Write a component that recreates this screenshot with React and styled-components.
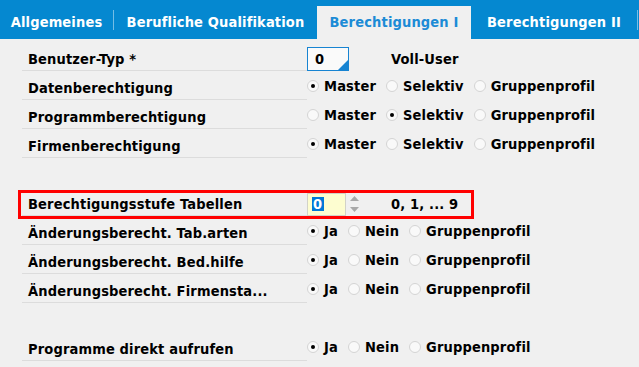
import React from 'react';
import styled, { createGlobalStyle, css } from 'styled-components';

const GlobalStyle = createGlobalStyle`
  html, body { margin: 0; padding: 0; background: #f0f0f0; }
  body {
    font-family: "DejaVu Sans Condensed", "DejaVu Sans", sans-serif;
    font-weight: bold;
    font-size: 14.5px;
    letter-spacing: 0.15px;
    color: #000;
  }
`;

const Page = styled.div`
  width: 639px;
  height: 367px;
  overflow: hidden;
  background: #f0f0f0;
`;

const TabBar = styled.div`
  display: flex;
  align-items: flex-end;
  height: 39px;
  background: #0588d0;
`;

const Tab = styled.div`
  flex: none;
  width: ${p => p.$w}px;
  height: 33px;
  line-height: 33px;
  text-align: center;
  white-space: nowrap;
  color: #fff;
  ${p => p.$active && css`
    background: #f0f0f0;
    color: #1c8bd6;
  `}
`;

const TabSep = styled.div`
  flex: none;
  align-self: center;
  width: 1px;
  height: 20px;
  background: rgba(255, 255, 255, 0.45);
`;

const Form = styled.div`
  padding: 4px 0 0 22px;
`;

const Row = styled.div`
  position: relative;
  display: grid;
  grid-template-columns: 285px 1fr;
  height: 29px;
  ${p => p.$highlight && css`
    &::after {
      content: '';
      position: absolute;
      top: 2px;
      left: -4px;
      width: 456px;
      height: 29px;
      box-sizing: border-box;
      border: 3px solid #ff0000;
      pointer-events: none;
    }
  `}
`;

const Spacer = styled.div`
  height: 29px;
`;

const Label = styled.div`
  height: 28px;
  box-sizing: border-box;
  padding: 5px 0 0 6px;
  line-height: 23px;
  border-bottom: 1px solid #dcdcdc;
  white-space: nowrap;
  overflow: hidden;
`;

const Controls = styled.div`
  display: flex;
  align-items: center;
  height: 28px;
`;

const StaticText = styled.div`
  align-self: flex-start;
  margin-left: ${p => p.$ml}px;
  padding-top: 5px;
  line-height: 23px;
  white-space: nowrap;
`;

const CodeInput = styled.div`
  position: relative;
  align-self: flex-start;
  margin-top: 4px;
  width: 42px;
  height: 24px;
  box-sizing: border-box;
  border: 1px solid #1784d2;
  background: #fafafa;
  padding-left: 7px;
  line-height: 22px;
  overflow: hidden;
`;

const Corner = styled.svg`
  position: absolute;
  right: 0;
  bottom: 0;
`;

const SpinInput = styled.div`
  align-self: flex-start;
  margin-top: 5px;
  width: 39px;
  height: 23px;
  box-sizing: border-box;
  border: 1px solid #d2d2c8;
  background: #fdfdd0;
  padding: 2px 0 0 4px;
`;

const Selected = styled.span`
  display: inline-block;
  height: 14px;
  line-height: 14px;
  padding: 0 2px 0 1px;
  background: #0078d7;
  color: #fff;
`;

const SpinArrows = styled.svg`
  align-self: flex-start;
  margin: 8px 0 0 4px;
  flex: none;
`;

const RadioGroup = styled.div`
  display: flex;
  align-items: center;
  gap: 10px;
  height: 28px;
`;

const Option = styled.label`
  display: flex;
  align-items: center;
  gap: 5px;
  line-height: 28px;
  white-space: nowrap;
`;

const Circle = styled.span`
  position: relative;
  flex: none;
  width: 12px;
  height: 12px;
  box-sizing: border-box;
  border-radius: 50%;
  border: 1px solid #d4d4d4;
  background: #f9f9f9;
  ${p => p.$checked && css`
    &::after {
      content: '';
      position: absolute;
      left: 3px;
      top: 3px;
      width: 4px;
      height: 4px;
      border-radius: 50%;
      background: #000;
    }
  `}
`;

function Radios({ options, value }) {
  return (
    <RadioGroup>
      {options.map(o => (
        <Option key={o}>
          <Circle $checked={o === value} />
          {o}
        </Option>
      ))}
    </RadioGroup>
  );
}

const MSG = ['Master', 'Selektiv', 'Gruppenprofil'];
const JNG = ['Ja', 'Nein', 'Gruppenprofil'];

export default function App() {
  return (
    <Page>
      <GlobalStyle />
      <TabBar>
        <Tab $w={113}>Allgemeines</Tab>
        <TabSep />
        <Tab $w={203}>Berufliche Qualifikation</Tab>
        <Tab $w={154} $active>Berechtigungen I</Tab>
        <Tab $w={166}>Berechtigungen II</Tab>
        <TabSep />
      </TabBar>
      <Form>
        <Row>
          <Label>Benutzer-Typ *</Label>
          <Controls>
            <CodeInput>
              0
              <Corner width="10" height="10" viewBox="0 0 10 10">
                <polygon points="10,0 10,10 0,10" fill="#1784d2" />
              </Corner>
            </CodeInput>
            <StaticText $ml={42}>Voll-User</StaticText>
          </Controls>
        </Row>
        <Row>
          <Label>Datenberechtigung</Label>
          <Radios options={MSG} value="Master" />
        </Row>
        <Row>
          <Label>Programmberechtigung</Label>
          <Radios options={MSG} value="Selektiv" />
        </Row>
        <Row>
          <Label>Firmenberechtigung</Label>
          <Radios options={MSG} value="Master" />
        </Row>
        <Spacer />
        <Row $highlight>
          <Label>Berechtigungsstufe Tabellen</Label>
          <Controls>
            <SpinInput>
              <Selected>0</Selected>
            </SpinInput>
            <SpinArrows width="9" height="16" viewBox="0 0 9 16">
              <polygon points="4.5,0 9,5 0,5" fill="#a8a8a8" />
              <polygon points="0,11 9,11 4.5,16" fill="#a8a8a8" />
            </SpinArrows>
            <StaticText $ml={32}>0, 1, ... 9</StaticText>
          </Controls>
        </Row>
        <Row>
          <Label>Änderungsberecht. Tab.arten</Label>
          <Radios options={JNG} value="Ja" />
        </Row>
        <Row>
          <Label>Änderungsberecht. Bed.hilfe</Label>
          <Radios options={JNG} value="Ja" />
        </Row>
        <Row>
          <Label>Änderungsberecht. Firmensta...</Label>
          <Radios options={JNG} value="Ja" />
        </Row>
        <Spacer />
        <Row>
          <Label>Programme direkt aufrufen</Label>
          <Radios options={JNG} value="Ja" />
        </Row>
      </Form>
    </Page>
  );
}
